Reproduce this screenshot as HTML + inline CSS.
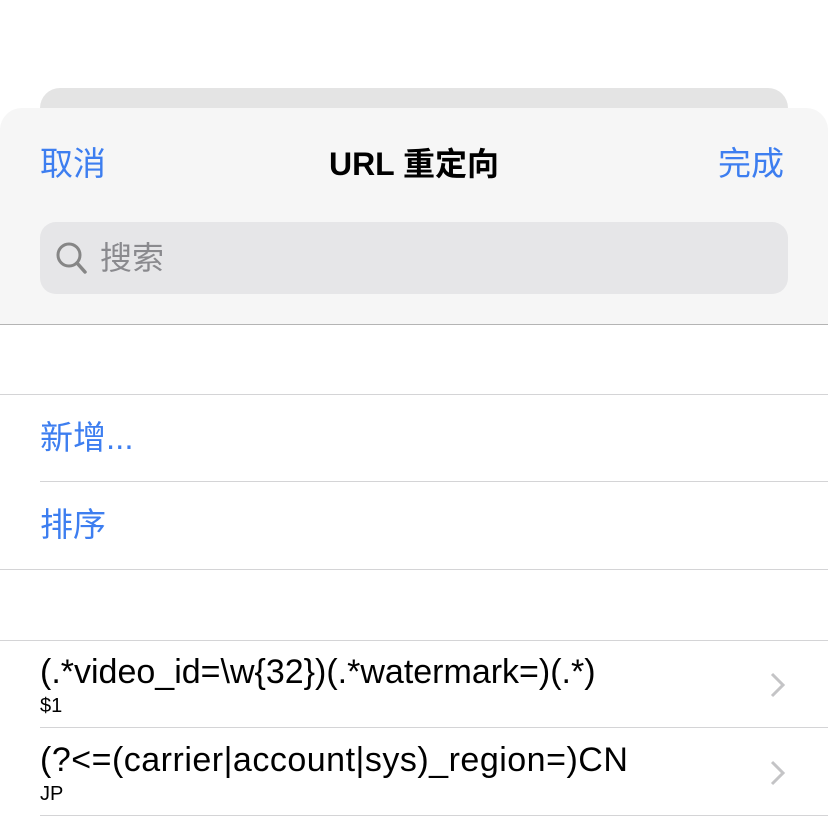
<!DOCTYPE html>
<html><head><meta charset="utf-8"><style>
*{margin:0;padding:0;box-sizing:border-box}
body{width:828px;height:821px;background:#fff;position:relative;overflow:hidden;font-family:"Liberation Sans","Noto Sans CJK SC",sans-serif}
.back{position:absolute;left:40px;top:88px;width:748px;height:60px;background:#e4e4e4;border-radius:20px 20px 0 0}
.sheet{position:absolute;left:0;top:108px;width:828px;height:713px;background:#fff;border-radius:22px 22px 0 0;overflow:hidden}
.head{position:absolute;left:0;top:0;width:828px;height:217px;background:#f6f6f6;border-bottom:1px solid #b4b4b4}
.t{position:absolute;white-space:nowrap}
.blue{color:#3d7ef0}
.search{position:absolute;left:40px;top:114px;width:748px;height:72px;background:#e6e6e8;border-radius:16px}
.line{position:absolute;height:1px;background:#d4d4d6}
.chev{position:absolute;left:768px}
</style></head><body>
<div class="back"></div>
<div class="sheet">
 <div class="head">
  <div class="t blue" style="left:40px;top:35px;font-size:33px;line-height:42px">取消</div>
  <div class="t" style="left:0;width:828px;text-align:center;top:35px;font-size:32px;line-height:42px;font-weight:bold;color:#000">URL 重定向</div>
  <div class="t blue" style="left:718px;top:35px;font-size:33px;line-height:42px">完成</div>
  <div class="search">
   <svg style="position:absolute;left:14px;top:18px" width="38" height="38" viewBox="0 0 38 38"><circle cx="15" cy="15" r="11" fill="none" stroke="#868686" stroke-width="3"/><line x1="23" y1="23" x2="31" y2="32" stroke="#868686" stroke-width="3.5" stroke-linecap="round"/></svg>
   <div class="t" style="left:60px;top:15px;font-size:32px;line-height:42px;color:#8a8a8e">搜索</div>
  </div>
 </div>
 <div class="line" style="left:0;width:828px;top:286px"></div>
 <div class="t blue" style="left:40px;top:309px;font-size:33px;line-height:42px">新增...</div>
 <div class="line" style="left:40px;width:788px;top:373px"></div>
 <div class="t blue" style="left:40px;top:396px;font-size:33px;line-height:42px">排序</div>
 <div class="line" style="left:0;width:828px;top:461px"></div>
 <div class="line" style="left:0;width:828px;top:532px"></div>
 <div class="t" style="left:40px;top:544px;font-size:34px;line-height:40px;color:#000">(.*video_id=\w{32})(.*watermark=)(.*)</div>
 <div class="t" style="left:40px;top:586px;font-size:20px;line-height:24px;color:#000">$1</div>
 <svg class="chev" style="top:563px" width="20" height="28" viewBox="0 0 20 28"><path d="M4 3 L15 14 L4 25" fill="none" stroke="#c4c4c6" stroke-width="3"/></svg>
 <div class="line" style="left:40px;width:788px;top:619px"></div>
 <div class="t" style="left:40px;top:632px;font-size:34px;line-height:40px;color:#000;letter-spacing:0.5px">(?&lt;=(carrier|account|sys)_region=)CN</div>
 <div class="t" style="left:40px;top:674px;font-size:20px;line-height:24px;color:#000">JP</div>
 <svg class="chev" style="top:651px" width="20" height="28" viewBox="0 0 20 28"><path d="M4 3 L15 14 L4 25" fill="none" stroke="#c4c4c6" stroke-width="3"/></svg>
 <div class="line" style="left:40px;width:788px;top:707px"></div>
</div>
</body></html>
